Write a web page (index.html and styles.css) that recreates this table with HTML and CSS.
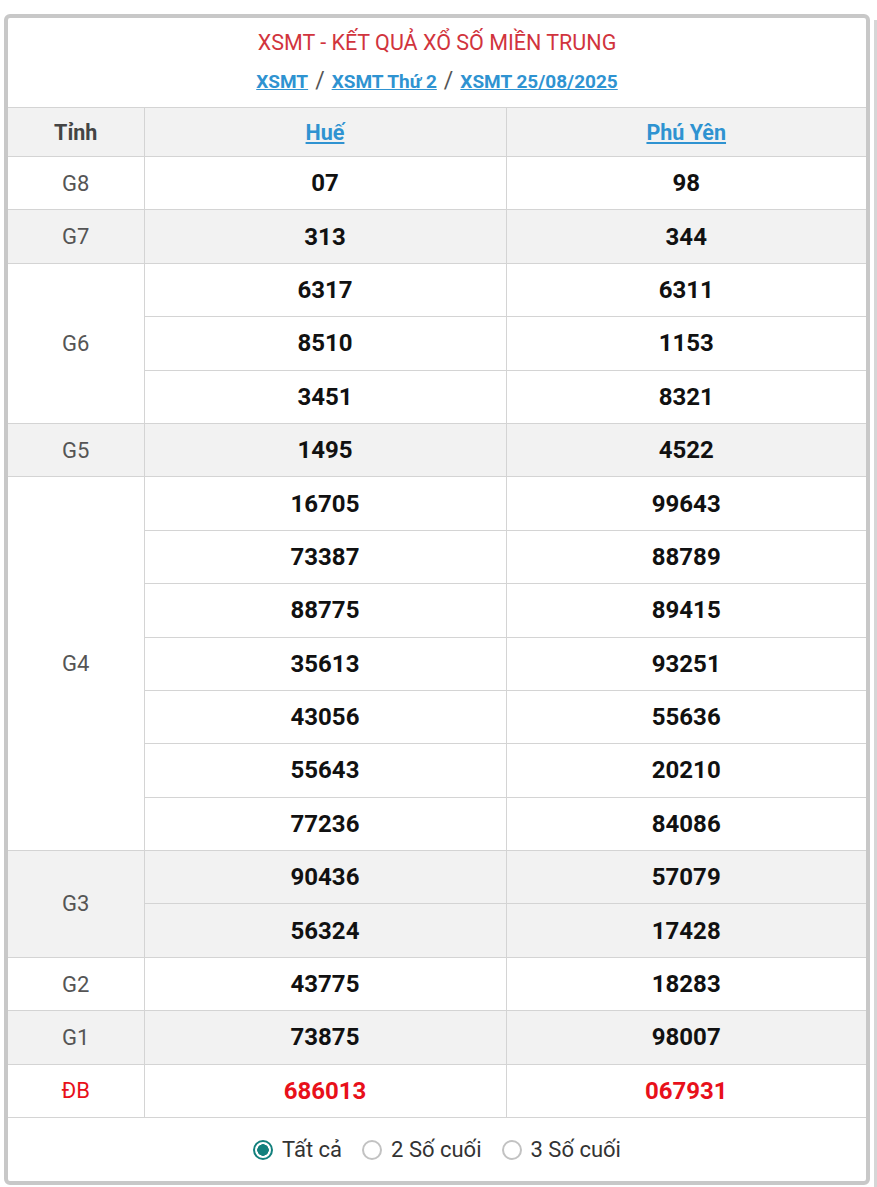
FILE: index.html
```html
<!DOCTYPE html>
<html lang="vi">
<head>
<meta charset="utf-8">
<title>XSMT</title>
<link rel="stylesheet" href="styles.css">
</head>
<body>
<div class="page">
  <div class="box">
    <div class="head">
      <h2 class="title">XSMT - KẾT QUẢ XỔ SỐ MIỀN TRUNG</h2>
      <div class="crumbs">
        <a href="#">XSMT</a><span class="sep">/</span><a href="#">XSMT Thứ 2</a><span class="sep">/</span><a href="#">XSMT 25/08/2025</a>
      </div>
    </div>
    <table class="kq">
      <colgroup><col class="c1"><col class="c2"><col class="c3"></colgroup>
      <thead>
        <tr class="alt"><th class="lbl">Tỉnh</th><th><a href="#">Huế</a></th><th><a href="#">Phú Yên</a></th></tr>
      </thead>
      <tbody>
        <tr><td class="g">G8</td><td>07</td><td>98</td></tr>
        <tr class="alt"><td class="g">G7</td><td>313</td><td>344</td></tr>
        <tr><td class="g" rowspan="3">G6</td><td>6317</td><td>6311</td></tr>
        <tr><td>8510</td><td>1153</td></tr>
        <tr><td>3451</td><td>8321</td></tr>
        <tr class="alt"><td class="g">G5</td><td>1495</td><td>4522</td></tr>
        <tr><td class="g" rowspan="7">G4</td><td>16705</td><td>99643</td></tr>
        <tr><td>73387</td><td>88789</td></tr>
        <tr><td>88775</td><td>89415</td></tr>
        <tr><td>35613</td><td>93251</td></tr>
        <tr><td>43056</td><td>55636</td></tr>
        <tr><td>55643</td><td>20210</td></tr>
        <tr><td>77236</td><td>84086</td></tr>
        <tr class="alt"><td class="g" rowspan="2">G3</td><td>90436</td><td>57079</td></tr>
        <tr class="alt"><td>56324</td><td>17428</td></tr>
        <tr><td class="g">G2</td><td>43775</td><td>18283</td></tr>
        <tr class="alt"><td class="g">G1</td><td>73875</td><td>98007</td></tr>
        <tr class="db"><td class="g">ĐB</td><td>686013</td><td>067931</td></tr>
      </tbody>
    </table>
    <div class="foot">
      <label class="opt"><span class="radio on"></span>Tất cả</label>
      <label class="opt"><span class="radio"></span>2 Số cuối</label>
      <label class="opt"><span class="radio"></span>3 Số cuối</label>
    </div>
  </div>
  <div class="strip"></div>
</div>
</body>
</html>
```
FILE: styles.css
```css
html, body { margin: 0; padding: 0; background: #fff; }
body { font-family: Roboto, "Noto Sans", sans-serif; color: #222; }
.page { display: flex; align-items: flex-start; padding: 14px 0 0 4px; gap: 4px; }
.box {
  width: 866px; box-sizing: border-box;
  border: 4px solid #c8c8c8; border-radius: 6px;
  background: #fff; overflow: hidden;
}
.strip { width: 3px; height: 1170px; margin-top: 6px; background: #d6d6d6; }
.head { height: 89px; text-align: center; box-sizing: border-box; padding-top: 11px; }
.title { margin: 0; font-size: 21.5px; font-weight: 400; color: #d1343d; line-height: 28px; }
.crumbs { margin-top: 11px; font-size: 19px; line-height: 26px; }
.crumbs a { color: #2f93d1; font-weight: 700; text-decoration: underline; }
.crumbs .sep { color: #555; font-size: 23px; margin: 0 7px; }
.kq { width: 100%; border-collapse: collapse; table-layout: fixed; }
.kq col.c1 { width: 136px; }
.kq col.c2 { width: 362px; }
.kq th, .kq td {
  border: 1px solid #d4d4d4; text-align: center; padding: 0;
  font-size: 24px; font-weight: 700; color: #111;
}
.kq th:first-child, .kq td:first-child { border-left: none; }
.kq th:last-child, .kq td:last-child { border-right: none; }
.kq thead tr { height: 49px; }
.kq tbody tr { height: 53.4px; }
.kq tr.alt th, .kq tr.alt td { background: #f2f2f2; }
.kq th.lbl { font-size: 21.5px; color: #444; }
.kq th a { color: #2f93d1; font-size: 21.5px; text-decoration: underline; }
.kq td.g { font-weight: 400; font-size: 22px; color: #555; background: #fff; }
.kq tr.alt td.g { background: #f2f2f2; }
.kq tr.db td { color: #e8101a; }
.kq tr.db td.g { color: #e8101a; }
.foot { height: 63px; display: flex; justify-content: center; align-items: center; gap: 20px; font-size: 22px; color: #333; }
.opt { display: flex; align-items: center; gap: 9px; }
.radio {
  width: 20px; height: 20px; box-sizing: border-box; border-radius: 50%;
  border: 2px solid #c2c2c2; background: #fff; display: inline-block;
}
.radio.on { border-color: #12807d; background: radial-gradient(circle, #12807d 0 5.5px, #fff 6px); }
```
